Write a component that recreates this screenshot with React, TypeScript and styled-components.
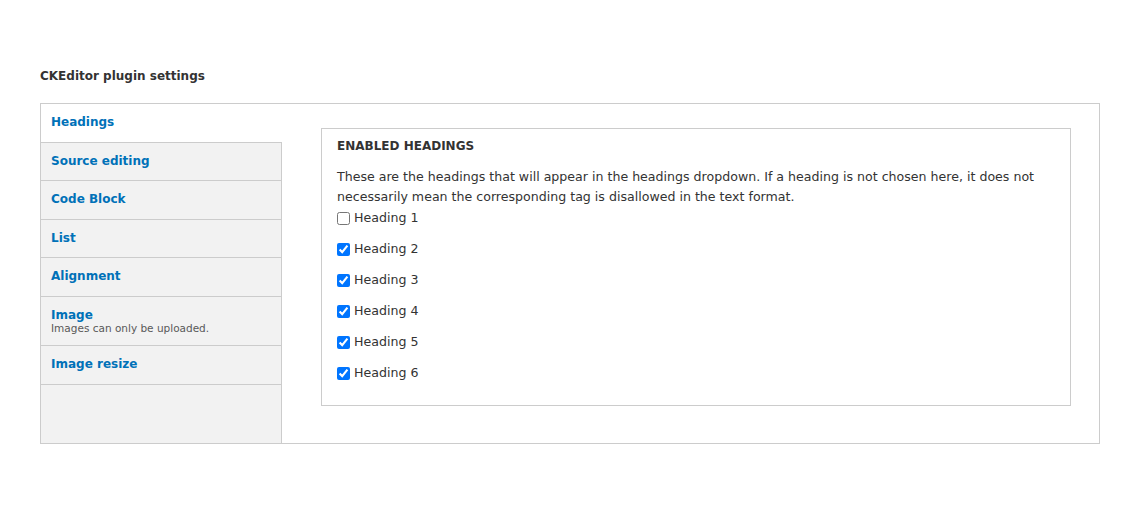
import styled, { createGlobalStyle } from 'styled-components'
import { useState } from 'react'

const Global = createGlobalStyle`
    html, body {
        margin: 0;
        padding: 0;
        background: #fff;
    }
    body {
        font-family: "DejaVu Sans", Verdana, sans-serif;
        color: #333;
    }
`

const Page = styled.div`
    padding: 68px 40px 40px 40px;
`

const Title = styled.h2`
    margin: 0 0 19px 0;
    font-size: 12px;
    line-height: 16px;
    font-weight: 700;
    color: #333;
`

const Tabs = styled.div`
    display: flex;
    border: 1px solid #ccc;
    min-height: 339px;
`

const Menu = styled.ul`
    list-style: none;
    margin: 0;
    padding: 0;
    width: 240px;
    flex: none;
    background-color: #f2f2f2;
    border-right: 1px solid #ccc;
`

interface TabProps {
    $active?: boolean
}

const Tab = styled.li<TabProps>`
    padding: 10px 10px 11px 10px;
    border-bottom: 1px solid #ccc;
    background-color: ${({ $active }) => ($active ? '#fff' : 'transparent')};
    margin-right: ${({ $active }) => ($active ? '-1px' : '0')};
    cursor: pointer;
`

const TabLabel = styled.strong`
    display: block;
    font-size: 12px;
    line-height: 16.5px;
    font-weight: 700;
    color: #0071b8;
`

const TabSummary = styled.span`
    display: block;
    font-size: 10.5px;
    line-height: 11px;
    color: #595959;
`

const Pane = styled.div`
    flex: 1;
    padding: 24px 28px 36px 39px;
`

const Fieldset = styled.fieldset`
    margin: 0;
    border: 1px solid #ccc;
    padding: 9px 15px 24px 15px;
    box-sizing: border-box;
`

const Legend = styled.div`
    font-size: 12px;
    line-height: 16px;
    font-weight: 700;
    text-transform: uppercase;
    color: #333;
    margin-bottom: 13px;
`

const Description = styled.p`
    margin: 0;
    font-size: 12.6px;
    line-height: 20px;
    color: #333;
`

const Options = styled.div`
    display: flex;
    flex-direction: column;
    gap: 15px;
    margin-top: 3px;
`

const Option = styled.label`
    display: flex;
    align-items: center;
    gap: 4px;
    font-size: 12.6px;
    line-height: 16px;
    color: #333;
`

const Box = styled.input`
    margin: 0;
    width: 13px;
    height: 13px;
    accent-color: #0075ff;
`

const tabs = [
    { label: 'Headings' },
    { label: 'Source editing' },
    { label: 'Code Block' },
    { label: 'List' },
    { label: 'Alignment' },
    { label: 'Image', summary: 'Images can only be uploaded.' },
    { label: 'Image resize' },
]

export default function App() {
    const [checked, setChecked] = useState([false, true, true, true, true, true])

    function toggle(i: number) {
        setChecked(checked.map((c, j) => (j === i ? !c : c)))
    }

    return (
        <Page>
            <Global />
            <Title>CKEditor plugin settings</Title>
            <Tabs>
                <Menu>
                    {tabs.map((t, i) => (
                        <Tab key={t.label} $active={i === 0}>
                            <TabLabel>{t.label}</TabLabel>
                            {t.summary && <TabSummary>{t.summary}</TabSummary>}
                        </Tab>
                    ))}
                </Menu>
                <Pane>
                    <Fieldset>
                        <Legend>Enabled headings</Legend>
                        <Description>
                            These are the headings that will appear in the headings dropdown. If a heading is not chosen here, it does not necessarily mean the corresponding tag is disallowed in the text format.
                        </Description>
                        <Options>
                            {checked.map((c, i) => (
                                <Option key={i}>
                                    <Box type="checkbox" checked={c} onChange={() => toggle(i)} />
                                    Heading {i + 1}
                                </Option>
                            ))}
                        </Options>
                    </Fieldset>
                </Pane>
            </Tabs>
        </Page>
    )
}
